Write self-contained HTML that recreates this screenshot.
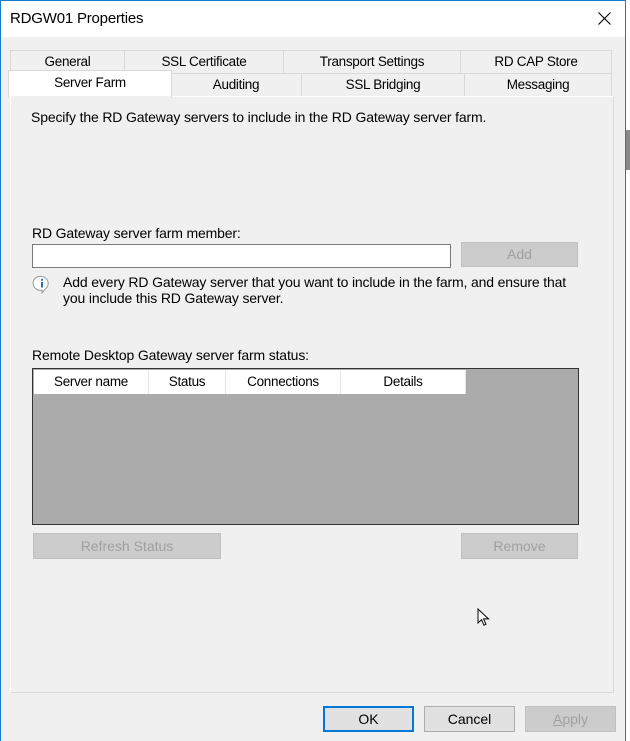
<!DOCTYPE html>
<html><head><style>
*{margin:0;padding:0;box-sizing:border-box}
body{width:630px;height:741px;overflow:hidden;background:#fff;font-family:"Liberation Sans",sans-serif;font-size:12px;color:#000;position:relative}
.a{position:absolute}
.win{left:0;top:0;width:626px;height:741px;background:#f0f0f0;border-left:1px solid #1979ca;border-right:1px solid #1979ca;border-top:1px solid #1979ca}
.title{left:1px;top:1px;width:624px;height:36px;background:#fff}
.tab{position:absolute;height:23px;border:1px solid #d9d9d9;border-bottom:none;background:#f0f0f0;text-align:center;line-height:21px;font-size:13.5px;letter-spacing:-0.3px}
.btn{position:absolute;border:1px solid #adadad;background:#e1e1e1;text-align:center;font-size:14px}
.dis{background:#cccccc;border-color:#bfbfbf;color:#a0a0a0}
.t{position:absolute;white-space:nowrap;letter-spacing:-0.15px;font-size:14px}
.th{position:absolute;top:0;height:24px;border-right:1px solid #e5e5e5;text-align:center;line-height:24px;font-size:13.5px;letter-spacing:-0.3px}
</style></head><body>
<div class="a" style="left:626px;top:0;width:4px;height:741px;background:#fff"></div>
<div class="a" style="left:626px;top:130px;width:4px;height:40px;background:#888"></div>
<div class="a win"></div>
<div class="a title"></div>
<div class="t" style="left:10px;top:10px;font-size:15px;letter-spacing:-0.2px">RDGW01 Properties</div>
<svg class="a" style="left:598px;top:12px" width="13" height="13" viewBox="0 0 13 13"><path d="M0.5 0.5L12.5 12.5M12.5 0.5L0.5 12.5" stroke="#000" stroke-width="1.1"/></svg>

<div class="tab" style="left:10px;top:50px;width:115px">General</div>
<div class="tab" style="left:124px;top:50px;width:160px">SSL Certificate</div>
<div class="tab" style="left:283px;top:50px;width:178px">Transport Settings</div>
<div class="tab" style="left:460px;top:50px;width:152px">RD CAP Store</div>
<div class="tab" style="left:170px;top:73px;width:132px">Auditing</div>
<div class="tab" style="left:301px;top:73px;width:164px">SSL Bridging</div>
<div class="tab" style="left:464px;top:73px;width:148px">Messaging</div>

<div class="a" style="left:10px;top:96px;width:604px;height:597px;border:1px solid #fff;border-right-color:#d9d9d9;border-bottom-color:#d9d9d9;background:#f0f0f0"></div>
<div class="tab" style="left:8px;top:70px;width:164px;height:28px;background:#fff;border-color:#d9d9d9;line-height:23px">Server Farm</div>
<div class="a" style="left:11px;top:96px;width:160px;height:2px;background:#f0f0f0"></div>

<div class="t" style="left:31px;top:109px">Specify the RD Gateway servers to include in the RD Gateway server farm.</div>
<div class="t" style="left:32px;top:225px">RD Gateway server farm member:</div>
<div class="a" style="left:32px;top:244px;width:419px;height:24px;background:#fff;border:1px solid #7a7a7a"></div>
<div class="btn dis" style="left:461px;top:242px;width:117px;height:25px;line-height:23px">Add</div>
<svg class="a" style="left:32px;top:274px" width="20" height="20" viewBox="0 0 20 20"><path d="M10 2.5a7 7 0 1 0 0 13.5l0 3 3-3.7a7 7 0 0 0-3-12.8z" fill="#fff" stroke="#9a9a9a"/><circle cx="10" cy="5.8" r="1.1" fill="#2b6cb0"/><rect x="9" y="8" width="2" height="5.5" fill="#2b6cb0"/></svg>
<div class="t" style="left:63px;top:274px">Add every RD Gateway server that you want to include in the farm, and ensure that</div>
<div class="t" style="left:63px;top:290px">you include this RD Gateway server.</div>
<div class="t" style="left:32px;top:347px">Remote Desktop Gateway server farm status:</div>
<div class="a" style="left:32px;top:368px;width:547px;height:157px;background:#ababab;border:1px solid #333">
 <div class="a" style="left:1px;top:1px;width:432px;height:24px;background:#fff">
  <div class="th" style="left:0;width:115px">Server name</div>
  <div class="th" style="left:115px;width:77px">Status</div>
  <div class="th" style="left:192px;width:115px">Connections</div>
  <div class="th" style="left:307px;width:125px">Details</div>
 </div>
</div>
<div class="btn dis" style="left:33px;top:533px;width:188px;height:26px;line-height:24px">Refresh Status</div>
<div class="btn dis" style="left:461px;top:533px;width:117px;height:26px;line-height:24px">Remove</div>
<svg class="a" style="left:477px;top:608px" width="14" height="20" viewBox="0 0 14 20"><path d="M1 1v14l3.5-3.3 2.5 5.5 2-1-2.5-5.3h5z" fill="#fff" stroke="#000"/></svg>

<div class="btn" style="left:323px;top:706px;width:91px;height:26px;line-height:22px;border:2px solid #0078d7">OK</div>
<div class="btn" style="left:424px;top:706px;width:91px;height:26px;line-height:24px">Cancel</div>
<div class="btn dis" style="left:525px;top:706px;width:91px;height:26px;line-height:24px"><u>A</u>pply</div>
</body></html>
